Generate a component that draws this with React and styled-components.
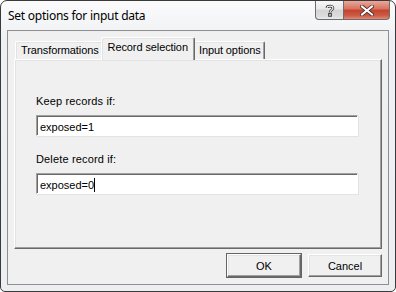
import React from 'react'
import styled, { createGlobalStyle } from 'styled-components'

const GlobalStyle = createGlobalStyle`
    html, body {
        margin: 0;
        padding: 0;
        background: #ffffff;
    }
    body {
        font-family: "Liberation Sans", Arial, sans-serif;
        font-size: 11px;
        color: #000;
    }
`

const Window = styled.div`
    width: 396px;
    height: 292px;
    box-sizing: border-box;
    display: flex;
    flex-direction: column;
    border: 1px solid #3a3a3a;
    border-radius: 7px 7px 5px 5px;
    background: linear-gradient(#fbfbfc, #eef0f3 40px, #eceef1);
    padding: 0 6px 6px 6px;
    overflow: hidden;
`

const TitleBar = styled.div`
    height: 29px;
    display: flex;
    align-items: flex-start;
    flex-shrink: 0;
`

const Title = styled.div`
    font-family: "Noto Sans", "Open Sans", sans-serif;
    font-size: 12px;
    letter-spacing: -0.25px;
    padding: 6px 0 0 1px;
    color: #000;
`

const CaptionButtons = styled.div`
    margin-left: auto;
    display: flex;
    margin-right: -1px;
`

const CaptionButton = styled.div`
    height: 19px;
    box-sizing: border-box;
    display: flex;
    align-items: center;
    justify-content: center;
    border: 1px solid #6d6d6d;
    border-top: none;
    width: ${p => p.$w}px;
    background: ${p => p.$close
        ? 'linear-gradient(#e9a99c, #d8705d 45%, #c4432b 50%, #cc5a45 80%, #e08a76)'
        : 'linear-gradient(#f7f7f7, #e8e8e8 45%, #d4d4d4 50%, #dcdcdc 85%, #ececec)'};
    border-radius: ${p => p.$close ? '0 0 4px 0' : '0 0 0 4px'};
    border-left: ${p => p.$close ? 'none' : '1px solid #6d6d6d'};
`

const Client = styled.div`
    flex: 1;
    border: 1px solid #8f8f8f;
    background: #f0f0f0;
    display: flex;
    flex-direction: column;
    padding: 6px 6px 7px 6px;
`

const TabStrip = styled.div`
    display: flex;
    align-items: flex-end;
    height: 22px;
    padding-left: 1px;
    position: relative;
    z-index: 1;
`

const Tab = styled.div`
    box-sizing: border-box;
    height: ${p => p.$active ? 23 : 18}px;
    padding: ${p => p.$active ? '3px 6px 0 6px' : '2px 3px 0 5px'};
    margin: ${p => p.$active ? '0 -2px -1px -2px' : '0'};
    border-top: 1px solid #ffffff;
    border-left: 1px solid #ffffff;
    border-right: 1px solid #696969;
    box-shadow: inset -1px 0 0 #a0a0a0, inset 1px 1px 0 #e3e3e3;
    border-radius: 2px 2px 0 0;
    background: #f0f0f0;
    white-space: nowrap;
    letter-spacing: -0.1px;
    position: relative;
    z-index: ${p => p.$active ? 2 : 1};
`

const Panel = styled.div`
    height: 190px;
    box-sizing: border-box;
    border-top: 1px solid #ffffff;
    border-left: 1px solid #ffffff;
    border-right: 1px solid #696969;
    border-bottom: 1px solid #696969;
    box-shadow: inset -1px -1px 0 #a0a0a0, inset 1px 1px 0 #e3e3e3;
    padding: 34px 23px 0 21px;
    display: flex;
    flex-direction: column;
`

const FieldLabel = styled.div`
    height: 14px;
    line-height: 14px;
    margin-bottom: 7px;
    letter-spacing: 0.15px;
`

const TextField = styled.div`
    height: 21px;
    box-sizing: border-box;
    background: #ffffff;
    border-top: 1px solid #a0a0a0;
    border-left: 1px solid #a0a0a0;
    border-right: 1px solid #ffffff;
    border-bottom: 1px solid #ffffff;
    box-shadow: inset 1px 1px 0 #696969, 1px 1px 0 #e3e3e3;
    padding: 2px 0 0 3px;
    margin-bottom: ${p => p.$gap}px;
    line-height: 14px;
    display: flex;
    align-items: center;
`

const Caret = styled.span`
    display: inline-block;
    width: 1px;
    height: 14px;
    background: #000;
`

const ButtonRow = styled.div`
    display: flex;
    justify-content: flex-end;
    gap: 7px;
    margin-top: auto;
`

const Button = styled.div`
    width: 74px;
    height: 23px;
    box-sizing: border-box;
    display: flex;
    align-items: center;
    justify-content: center;
    border-top: 1px solid #ffffff;
    border-left: 1px solid #ffffff;
    border-right: 1px solid #696969;
    border-bottom: 1px solid #696969;
    box-shadow: ${p => p.$default
        ? '0 0 0 1px #646464, inset -1px -1px 0 #a0a0a0, inset 1px 1px 0 #e3e3e3'
        : 'inset -1px -1px 0 #a0a0a0, inset 1px 1px 0 #e3e3e3'};
    background: #f0f0f0;
`

const HelpIcon = () => (
    <svg width="10" height="13" viewBox="0 0 10 13">
        <path d="M2 4 C2 1.5 8 1.5 8 4 C8 6 5 6 5 8.5" fill="none" stroke="#2e2e2e" strokeWidth="2.6" />
        <path d="M2 4 C2 1.5 8 1.5 8 4 C8 6 5 6 5 8.5" fill="none" stroke="#f4f4f4" strokeWidth="1.1" />
        <rect x="3.7" y="9.6" width="2.6" height="2.6" fill="#f4f4f4" stroke="#2e2e2e" strokeWidth="1" />
    </svg>
)

const CloseIcon = () => (
    <svg width="14" height="11" viewBox="0 0 14 11">
        <path d="M2 1.5 L12 9.5 M12 1.5 L2 9.5" stroke="#4a2a28" strokeWidth="3.6" strokeLinecap="square" />
        <path d="M2 1.5 L12 9.5 M12 1.5 L2 9.5" stroke="#ffffff" strokeWidth="2" strokeLinecap="square" />
    </svg>
)

const App = () => {
    return (
        <>
            <GlobalStyle />
            <Window>
                <TitleBar>
                    <Title>Set options for input data</Title>
                    <CaptionButtons>
                        <CaptionButton $w={29}><HelpIcon /></CaptionButton>
                        <CaptionButton $w={46} $close><CloseIcon /></CaptionButton>
                    </CaptionButtons>
                </TitleBar>
                <Client>
                    <TabStrip>
                        <Tab>Transformations</Tab>
                        <Tab $active>Record selection</Tab>
                        <Tab>Input options</Tab>
                    </TabStrip>
                    <Panel>
                        <FieldLabel>Keep records if:</FieldLabel>
                        <TextField $gap={16}>exposed=1</TextField>
                        <FieldLabel>Delete record if:</FieldLabel>
                        <TextField $gap={0}>exposed=0<Caret /></TextField>
                    </Panel>
                    <ButtonRow>
                        <Button $default>OK</Button>
                        <Button>Cancel</Button>
                    </ButtonRow>
                </Client>
            </Window>
        </>
    )
}

export default App
